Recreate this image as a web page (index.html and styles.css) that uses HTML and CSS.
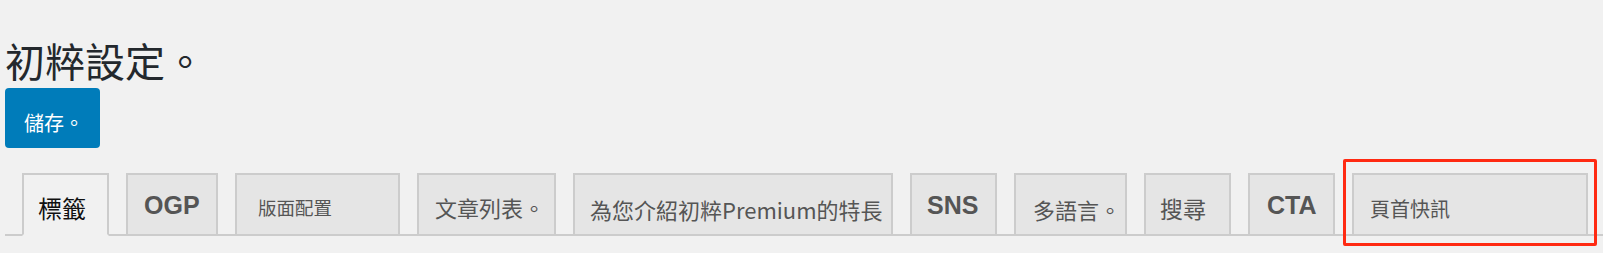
FILE: index.html
```html
<!DOCTYPE html>
<html lang="zh-Hant">
<head>
    <meta charset="UTF-8">
    <meta name="viewport" content="width=device-width, initial-scale=1.0">
    <title>初粹設定</title>
    <link rel="stylesheet" href="styles.css">
</head>
<body>
    <div class="wrap">
        <h1 class="page-title">初粹設定。</h1>
        <button class="button-save">儲存。</button>
        <!-- Settings tabs -->
        <nav class="tabs">
            <a class="tab tab-active tab-tags">標籤</a>
            <a class="tab tab-bold tab-ogp">OGP</a>
            <a class="tab tab-layout">版面配置</a>
            <a class="tab tab-list">文章列表。</a>
            <a class="tab tab-premium">為您介紹初粹Premium的特長</a>
            <a class="tab tab-bold tab-sns">SNS</a>
            <a class="tab tab-lang">多語言。</a>
            <a class="tab tab-search">搜尋</a>
            <a class="tab tab-bold tab-cta">CTA</a>
            <a class="tab tab-notice">頁首快訊</a>
        </nav>
        <!-- highlight box -->
        <div class="highlight"></div>
    </div>
</body>
</html>
```

FILE: styles.css
```css
body {
    margin: 0;
    background-color: #f1f1f1;
    font-family: "Noto Sans CJK TC", "Noto Sans", sans-serif;
    color: #23282d;
}
.wrap {
    position: relative;
    padding-left: 5px;
    height: 253px;
}
.page-title {
    margin: 0;
    padding-top: 36px;
    font-size: 40px;
    font-weight: 400;
    line-height: 48px;
}
.button-save {
    display: block;
    box-sizing: border-box;
    margin-top: 4px;
    width: 95px;
    height: 60px;
    padding: 9px 0 0 19px;
    background-color: #007cba;
    color: #fff;
    font-family: inherit;
    font-size: 20px;
    text-align: left;
    border: none;
    border-radius: 4px;
}
.tabs {
    display: flex;
    align-items: flex-end;
    gap: 17px;
    margin-top: 25px;
    padding-left: 17px;
    border-bottom: 2px solid #ccc;
}
.tab {
    box-sizing: border-box;
    height: 61px;
    padding-top: 21px;
    background-color: #e5e5e5;
    border: 2px solid #ccc;
    border-bottom: none;
    color: #555;
    font-size: 22px;
    line-height: 1;
    white-space: nowrap;
}
.tab-active {
    height: 63px;
    margin-bottom: -2px;
    background-color: #f1f1f1;
    border-bottom: 2px solid #f1f1f1;
    color: #111;
}
.tab-bold {
    padding-top: 18px;
    font-family: "Liberation Sans", Arial, sans-serif;
    font-weight: 700;
    font-size: 25px;
}
.tab-tags {
    width: 87px;
    padding-left: 14px;
    font-size: 24px;
}
.tab-ogp {
    width: 92px;
    padding-left: 16px;
}
.tab-layout {
    width: 165px;
    padding-left: 21px;
    padding-top: 23px;
    font-size: 18.5px;
}
.tab-list {
    width: 139px;
    padding-left: 16px;
}
.tab-premium {
    width: 320px;
    padding-left: 15px;
    padding-top: 23px;
}
.tab-sns {
    width: 87px;
    padding-left: 15px;
}
.tab-lang {
    width: 113px;
    padding-left: 17px;
    padding-top: 23px;
}
.tab-search {
    width: 87px;
    padding-left: 14px;
    padding-top: 22px;
    font-size: 23px;
}
.tab-cta {
    width: 87px;
    padding-left: 17px;
}
.tab-notice {
    width: 236px;
    padding-left: 16px;
    padding-top: 24px;
    font-size: 20px;
}
.highlight {
    position: absolute;
    left: 1343px;
    top: 159px;
    width: 254px;
    height: 87px;
    box-sizing: border-box;
    border: 3px solid #ff2a12;
    border-radius: 2px;
}
```
